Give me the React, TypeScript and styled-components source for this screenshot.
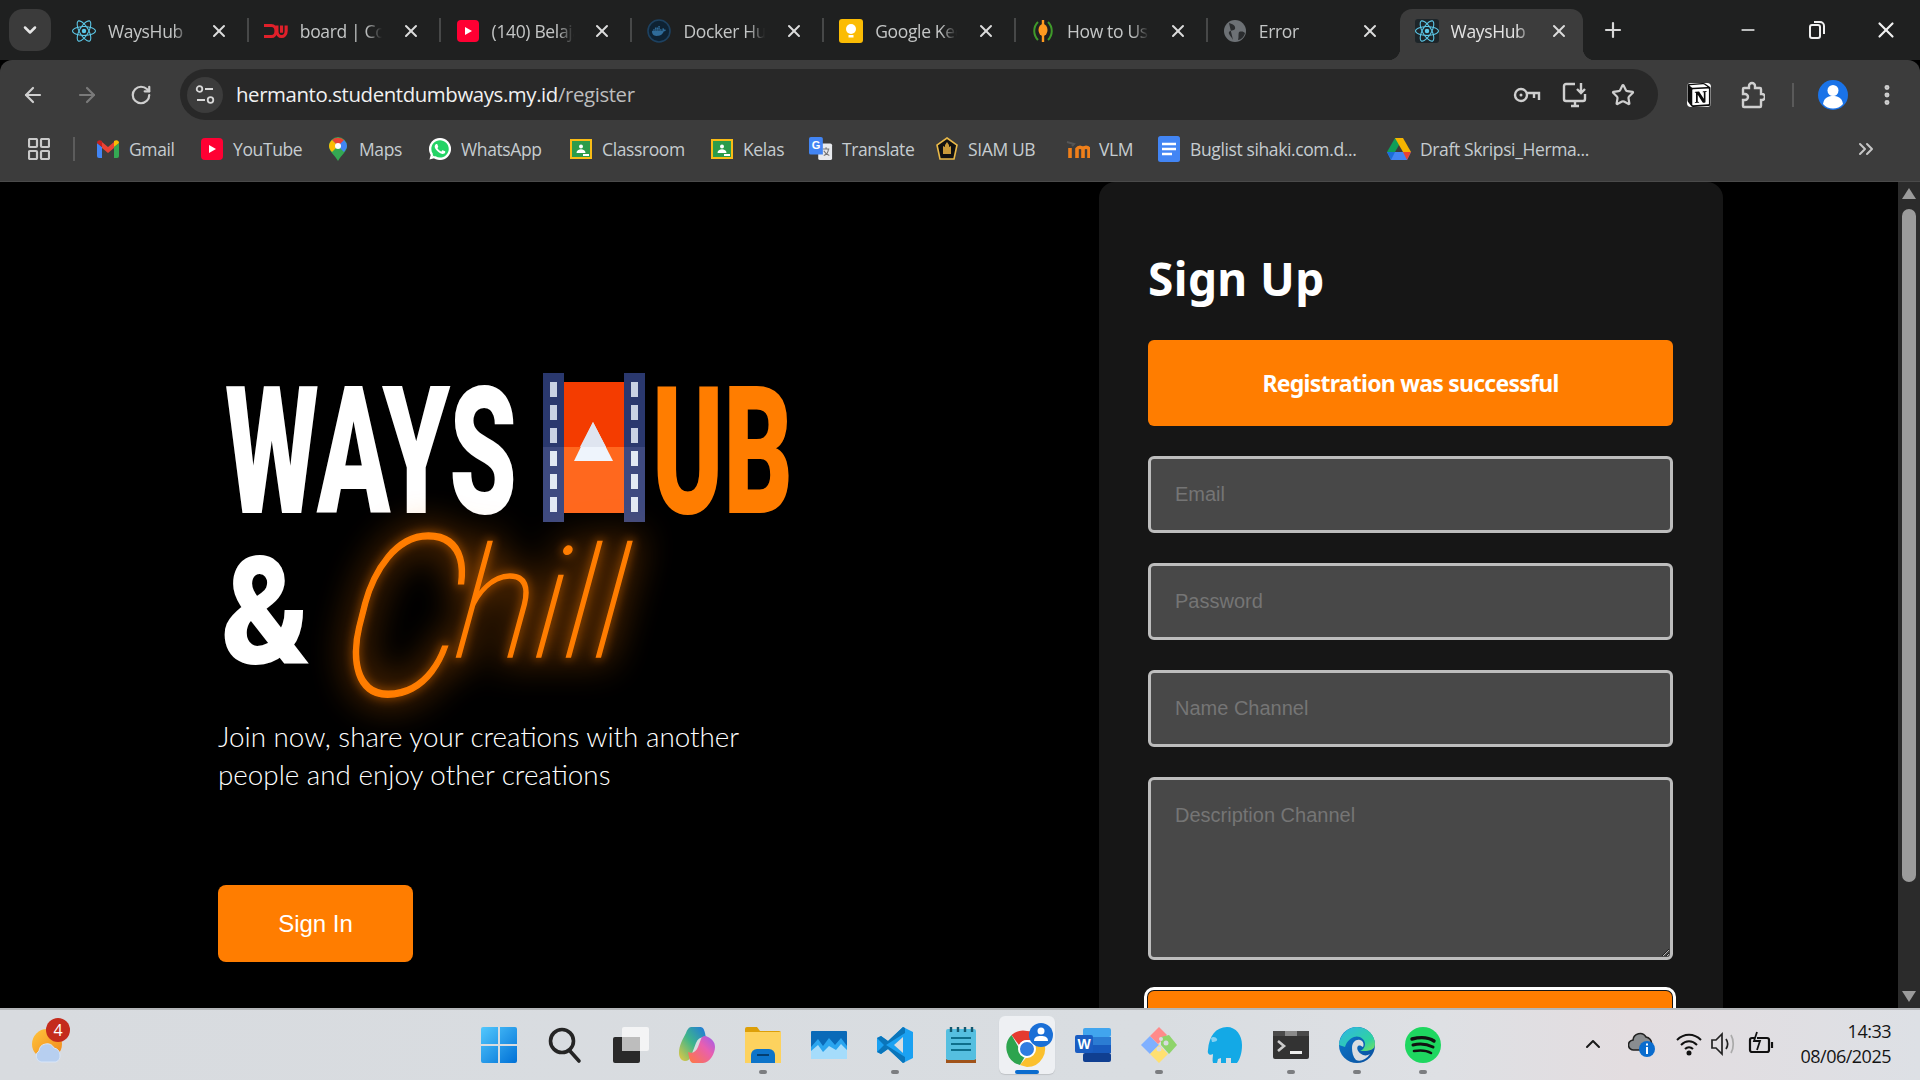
import React from "react";
import styled, { createGlobalStyle } from "styled-components";
import { ArrowLeft, ArrowRight, RotateCw, Star, MoreVertical, Plus, X, Minus, ChevronDown, ChevronsRight, ChevronUp } from "lucide-react";
import { SiReact, SiDocker, SiNotion } from "react-icons/si";
import { FaWhatsapp } from "react-icons/fa";

const Global = createGlobalStyle`
  html, body { margin: 0; padding: 0; background: #000; overflow: hidden; }
  * { box-sizing: border-box; }
  input::placeholder, textarea::placeholder { color: #757575; opacity: 1; }
`;

const UI = `"Open Sans", "Noto Sans", sans-serif`;

const Screen = styled.div`
  width: 1920px; height: 1080px; display: flex; flex-direction: column; overflow: hidden; background: #000;
`;

/* ---------- tab strip ---------- */
const TabStrip = styled.div`
  height: 60px; flex: none; background: #1f2020; display: flex; align-items: flex-end; padding-left: 9px;
`;
const TabMenu = styled.div`
  width: 42px; height: 42px; margin: 0 6px 9px 0; border-radius: 14px; background: #3b3b3b; color: #e6e6e6;
  display: flex; align-items: center; justify-content: center;
`;
const Tab = styled.div<{ $active?: boolean; $sep?: boolean }>`
  position: relative; flex: none; width: ${(p) => (p.$active ? 183.4 : 191.8)}px; height: 51px; display: flex; align-items: center;
  padding: 0 ${(p) => (p.$active ? 14 : 20)}px 8px 16px;
  border-radius: 12px 12px 0 0; background: ${(p) => (p.$active ? "#3c3c3c" : "transparent")};
  color: ${(p) => (p.$active ? "#e3e3e3" : "#c4c6c6")};
  &::after {
    content: ""; position: absolute; right: 0; top: 9px; width: 2px; height: 24px;
    background: ${(p) => (p.$sep ? "#474848" : "transparent")};
  }
`;
const TabFoot = styled.span<{ $side: "left" | "right" }>`
  position: absolute; bottom: 0; width: 12px; height: 12px;
  ${(p) => (p.$side === "left" ? "left: -12px;" : "right: -12px;")}
  background: radial-gradient(circle at ${(p) => (p.$side === "left" ? "0 0" : "100% 0")}, transparent 12px, #3c3c3c 12.5px);
`;
const TabIcon = styled.span<{ $dark?: boolean }>`
  width: 24px; height: 24px; flex: none; display: flex; align-items: center; justify-content: center; margin-left: -1px;
  background: ${(p) => (p.$dark ? "#1d2529" : "transparent")}; border-radius: 3px;
`;
const TabTitle = styled.span`
  margin-left: 12px; width: 82px; overflow: hidden; white-space: nowrap; font: 400 17.5px ${UI}; letter-spacing: -0.35px;
  mask-image: linear-gradient(to right, #000 80%, transparent 100%);
`;
const TabClose = styled.span`
  margin-left: auto; display: flex; color: #dcdcdc;
`;
const NewTab = styled.div`
  margin: 0 0 18px 18.5px; width: 24px; height: 24px; color: #d8d8d8; display: flex;
`;
const WinButtons = styled.div`
  margin-left: auto; display: flex; align-self: flex-start;
`;
const WinButton = styled.div`
  width: 69px; height: 60px; display: flex; align-items: center; justify-content: center; color: #f0f0f0;
`;

/* ---------- toolbar ---------- */
const Toolbar = styled.div`
  height: 60px; flex: none; background: #3c3c3c; border-radius: 12px 12px 0 0; display: flex; padding: 9px 0 0 6px;
`;
const ToolSlot = styled.div<{ $dim?: boolean; $gap?: number }>`
  width: 54px; height: 51px; flex: none; display: flex; align-items: center; justify-content: center;
  margin-left: ${(p) => p.$gap ?? 0}px; color: ${(p) => (p.$dim ? "#7a7a7a" : "#cfcfcf")};
`;
const Address = styled.div`
  width: 1478px; height: 51px; margin-left: 12px; flex: none; border-radius: 26px; background: #282828;
  display: flex; align-items: center; padding: 0 11px 0 7px;
`;
const SiteInfo = styled.div`
  width: 36px; height: 36px; border-radius: 50%; background: #3c3c3c; flex: none; display: flex; align-items: center; justify-content: center;
`;
const Url = styled.div`
  margin-left: 13px; padding-bottom: 2px; font: 400 20.4px ${UI}; letter-spacing: -0.4px; color: #bdbdbd; white-space: nowrap;
  b { font-weight: 400; color: #f1f1f1; }
`;
const AddrIcons = styled.div`
  margin-left: auto; display: flex;
`;
const AddrSlot = styled.div`
  width: 48px; height: 51px; display: flex; align-items: center; justify-content: center; color: #cfcfcf;
`;
const ToolSep = styled.div`
  width: 2px; height: 24px; margin: 14px 0 0 12px; background: #5a5a5a; flex: none;
`;

/* ---------- bookmarks ---------- */
const BookmarkBar = styled.div`
  height: 62px; flex: none; background: #3c3c3c; border-bottom: 1px solid #4a4a4a; display: flex; align-items: center; padding: 0 42px 3px 17px;
`;
const AppsSlot = styled.div`
  width: 44px; display: flex; justify-content: center;
`;
const BarSep = styled.div`
  width: 2px; height: 24px; background: #5c5c5c; margin: 0 21px 0 12px; flex: none;
`;
const Bookmark = styled.div<{ $w: number }>`
  width: ${(p) => p.$w}px; flex: none; display: flex; align-items: center; gap: 9px; white-space: nowrap;
  font: 400 17.5px ${UI}; letter-spacing: -0.38px; color: #c6ccd0;
`;
const BmIcon = styled.span`
  width: 24px; height: 24px; flex: none; display: flex; align-items: center; justify-content: center;
`;
const BarMore = styled.div`
  margin-left: auto; color: #c6c6c6; display: flex;
`;

/* ---------- page ---------- */
const Page = styled.div`
  height: 826px; flex: none; display: flex; background: #000; overflow: hidden;
`;
const Left = styled.div`
  flex: 0 0 1099px; padding: 188px 0 0 218px;
`;
const LogoSvg = styled.svg`
  display: block; overflow: visible;
`;
const Lead = styled.p`
  margin: 18px 0 0; width: 560px; font: 300 27.8px/38px Lato, sans-serif; color: #fff;
`;
const SignIn = styled.button`
  display: block; margin-top: 91px; width: 195px; height: 77px; border: 0; border-radius: 8px; background: #ff7d00; color: #fff;
  font: 400 24px "Liberation Sans", Arial, sans-serif;
`;
const Card = styled.div`
  flex: 0 0 624px; height: 1100px; background: #161616; border-radius: 16px; padding: 62px 50px 0 49px;
`;
const Title = styled.h1`
  margin: 0; font: 700 46px/68px "Noto Sans", "Open Sans", sans-serif; letter-spacing: 0.4px; color: #fff;
`;
const Alert = styled.div`
  margin-top: 28px; width: 525px; height: 86px; border-radius: 6px; background: #ff7d00; color: #fff; display: flex; align-items: center; justify-content: center;
  font: 700 23px "Noto Sans", "Open Sans", sans-serif; letter-spacing: -0.75px;
`;
const Form = styled.div`
  margin-top: 30px; display: flex; flex-direction: column; gap: 30px;
`;
const Field = styled.input`
  display: block; width: 525px; height: 77px; border: 3px solid #bdbdbd; border-radius: 6px; background: #484848; padding: 0 24px; outline: 0;
  font: 400 20px "Liberation Sans", Arial, sans-serif; color: #fff;
`;
const Area = styled.textarea`
  display: block; width: 525px; height: 183px; border: 3px solid #bdbdbd; border-radius: 6px; background: #484848; padding: 24px; outline: 0; resize: vertical;
  font: 400 20px "Liberation Sans", Arial, sans-serif; color: #fff;
`;
const Submit = styled.button`
  display: block; width: 524px; height: 77px; margin-top: 1px; border: 0; border-radius: 6px; background: #ff7d00; color: #fff;
  outline: 3px solid #fff; outline-offset: 1px; font: 400 24px "Liberation Sans", Arial, sans-serif;
`;
const Gutter = styled.div`
  flex: 0 0 175px;
`;
const Scrollbar = styled.div`
  flex: 0 0 22px; background: #2b2b2b; display: flex; flex-direction: column; align-items: center; padding: 6px 0 6px 0;
`;
const ScrollThumb = styled.div`
  width: 14px; height: 673px; margin-top: 10px; border-radius: 7px; background: #9b9b9b;
`;
const ScrollArrow = styled.svg<{ $end?: boolean }>`
  flex: none; ${(p) => (p.$end ? "margin-top: auto;" : "")}
`;

/* ---------- taskbar ---------- */
const Taskbar = styled.div`
  height: 72px; flex: none; border-top: 2px solid #b4b6b9; display: grid; grid-template-columns: 466px 992px 1fr;
  background: linear-gradient(90deg, #d8dbdf 0%, #d9dde1 60%, #dee0e4 75%, #e3dde0 85%, #dde0e5 100%);
`;
const Weather = styled.div`
  padding: 8px 0 0 28px; display: flex; align-items: flex-start;
`;
const TaskRow = styled.div`
  display: flex;
`;
const TaskSlot = styled.div<{ $active?: boolean; $running?: boolean }>`
  position: relative; width: 66px; height: 70px; flex: none; display: flex; align-items: center; justify-content: center; padding-bottom: 1px;
  &::before {
    content: ""; position: absolute; left: 5px; right: 5px; top: 6px; bottom: 6px; border-radius: 6px;
    background: ${(p) => (p.$active ? "#eef0f3" : "transparent")};
    box-shadow: ${(p) => (p.$active ? "0 1px 1px #bfc2c6" : "none")};
  }
  &::after {
    content: ""; position: absolute; bottom: 6px; left: 50%; height: 4px; border-radius: 2px;
    width: ${(p) => (p.$active ? 24 : 8)}px; margin-left: ${(p) => (p.$active ? -12 : -4)}px;
    background: ${(p) => (p.$active ? "#0a6cce" : p.$running ? "#7b7d80" : "transparent")};
  }
  svg { position: relative; overflow: visible; }
`;
const Tray = styled.div`
  display: flex; align-items: center; padding: 0 29px 2px 122px; color: #1a1a1a;
  svg { flex: none; }
`;
const TrayItem = styled.div<{ $w: number }>`
  width: ${(p) => p.$w}px; flex: none; display: flex; justify-content: center;
`;
const Clock = styled.div`
  margin-left: auto; text-align: right; font: 400 18px/25px ${UI}; letter-spacing: -0.5px; color: #141414;
`;

/* ---------- icons ---------- */
const ReactFav = () => <SiReact size={24} color="#5cc8e8" />;
const DwFav = () => (
  <svg width="26" height="18" viewBox="0 0 26 18" fill="none" stroke="#e0202a" strokeWidth="3.4">
    <path d="M0 3h8a5 6 0 0 1 0 12H0" /><path d="M0 9h5" strokeWidth="0" />
    <path d="M14 3v6a5 6 0 0 0 10 0V3M19 3v8" />
  </svg>
);
const YtFav = () => (
  <svg width="22" height="22" viewBox="0 0 22 22"><rect width="22" height="22" rx="4" fill="#ff0033" /><path d="M8 7l7 4-7 4z" fill="#fff" /></svg>
);
const DockerFav = () => (
  <svg width="24" height="24" viewBox="0 0 24 24"><circle cx="12" cy="12" r="11" fill="#0e2233" stroke="#1d4160" strokeWidth="1.6" /><SiDocker x="5" y="5" size={14} color="#2f6b99" /></svg>
);
const KeepFav = () => (
  <svg width="24" height="24" viewBox="0 0 24 24"><rect width="24" height="24" rx="3" fill="#fbbc04" /><circle cx="12" cy="10" r="5" fill="#fff" /><rect x="9.5" y="16" width="5" height="2.5" fill="#fff" /></svg>
);
const LeafFav = () => (
  <svg width="24" height="24" viewBox="0 0 24 24" fill="none"><path d="M7 3C2 8 2 16 7 21M17 3c5 5 5 13 0 18" stroke="#3f9a2a" strokeWidth="2" /><path d="M12 1v22" stroke="#ff9a1f" strokeWidth="2.4" /><ellipse cx="12" cy="11" rx="4.5" ry="6" fill="#ff9a1f" /></svg>
);
const GlobeFav = () => (
  <svg width="24" height="24" viewBox="0 0 24 24"><circle cx="12" cy="12" r="11" fill="#6d7175" /><path d="M6 4c4 1 7 3 6 6-1 2-5 1-6 3s2 4 4 8M16 13c3-1 5 0 6 1-1 4-4 7-7 7 1-3 0-6 1-8z" fill="#2a2c2e" /></svg>
);
const Gmail = () => (
  <svg width="22" height="18" viewBox="0 0 22 18"><path d="M0 3v13a2 2 0 0 0 2 2h3V7z" fill="#4285f4" /><path d="M22 3v13a2 2 0 0 1-2 2h-3V7z" fill="#34a853" /><path d="M5 2l6 5 6-5v6l-6 5-6-5z" fill="#ea4335" /><path d="M0 3c0-3 3-3.500 5-2v6z" fill="#c5221f" /><path d="M22 3c0-3-3-3.500-5-2v6z" fill="#fbbc04" /></svg>
);
const Maps = () => (
  <svg width="18" height="24" viewBox="0 0 18 24"><path d="M9 0a9 9 0 0 1 9 9c0 6-6 9-9 15-3-6-9-9-9-15a9 9 0 0 1 9-9z" fill="#34a853" /><path d="M3 3L15 15c2-3 3-4 3-6a9 9 0 0 0-3-6z" fill="#4285f4" /><path d="M3 3a9 9 0 0 1 12 0l-6 6z" fill="#ea4335" /><path d="M0 9c0-2 1-4 3-6l6 6-6 6c-2-2-3-4-3-6z" fill="#fbbc04" /><circle cx="9" cy="9" r="3" fill="#fff" /></svg>
);
const Wa = () => (
  <svg width="24" height="24" viewBox="0 0 24 24"><circle cx="12" cy="12" r="11" fill="#fff" /><circle cx="12" cy="12" r="9.500" fill="#25d366" /><FaWhatsapp x="0" y="0" size={24} color="#fff" /></svg>
);
const Classroom = () => (
  <svg width="24" height="24" viewBox="0 0 24 24"><rect x="1" y="2" width="22" height="20" fill="#f9bc15" /><rect x="3" y="4" width="18" height="16" fill="#2c9c4b" /><rect x="14" y="17" width="6" height="2" fill="#fff" /><circle cx="12" cy="9.500" r="2" fill="#fff" /><path d="M7.500 16c0-5 9-5 9 0z" fill="#fff" /></svg>
);
const Translate = () => (
  <svg width="26" height="26" viewBox="0 0 26 26"><rect x="10" y="7" width="15" height="18" rx="2" fill="#e8eaed" /><path d="M15 13h7M18.500 11v2M16 20c3-1 5-4 5-7M16 15c1 2 3 4 6 5" stroke="#757575" strokeWidth="1.200" fill="none" /><path d="M2 0h11a2 2 0 0 1 2 2v17H2a2 2 0 0 1-2-2V2a2 2 0 0 1 2-2z" fill="#4285f4" /><text x="7.500" y="13" textAnchor="middle" fontFamily="Liberation Sans" fontWeight="700" fontSize="12" fill="#fff">G</text></svg>
);
const Siam = () => (
  <svg width="24" height="24" viewBox="0 0 24 24"><path d="M12 1l10 7-3 14H5L2 8z" fill="#111" stroke="#e9b949" strokeWidth="1.600" /><path d="M12 5l2 3v2l2-1v8H8V9l2 1V8z" fill="#c99a3a" /></svg>
);
const Vlm = () => (
  <svg width="24" height="20" viewBox="0 0 24 20" fill="none"><path d="M1 3l7 2-2 2" stroke="#555" strokeWidth="2" /><path d="M4 19V9M11 19V10a3.500 3.500 0 0 1 6 0v9M23 19V10a3.500 3.500 0 0 0-6 0" stroke="#ef7f1a" strokeWidth="3.600" /></svg>
);
const Docs = () => (
  <svg width="22" height="26" viewBox="0 0 22 26"><rect width="22" height="26" rx="2.500" fill="#4285f4" /><path d="M4 8h14M4 13h14M4 18h10" stroke="#fff" strokeWidth="2.600" /></svg>
);
const Drive = () => (
  <svg width="24" height="22" viewBox="0 0 24 22"><path d="M8 0h8L8 14H0z" fill="#0f9d58" /><path d="M8 0h8l8 14h-8z" fill="#f4b400" /><path d="M0 14h24l-4 8H4z" fill="#4285f4" /><path d="M16 14h8l-4 8z" fill="#ea4335" /><path d="M0 14h8l-4 8z" fill="#1a6ed8" /></svg>
);

const InfoIcon = () => (
  <svg width="20" height="22" viewBox="0 0 20 22" fill="none" stroke="#d8d8d8" strokeWidth="1.800">
    <circle cx="4.500" cy="5" r="2.800" /><path d="M10 5h8M2 16h8" /><circle cx="15.500" cy="16" r="2.800" />
  </svg>
);
const KeyIcon = () => (
  <svg width="28" height="20" viewBox="0 0 28 20" fill="none" stroke="#cfcfcf" strokeWidth="2.400">
    <circle cx="8" cy="10" r="6" /><circle cx="8" cy="10" r="1.500" fill="#cfcfcf" strokeWidth="0" /><path d="M14 8h12v7M21 8v5" />
  </svg>
);
const InstallIcon = () => (
  <svg width="26" height="26" viewBox="0 0 26 26" fill="none" stroke="#cfcfcf" strokeWidth="2.400">
    <path d="M13 2H4a2 2 0 0 0-2 2v13a2 2 0 0 0 2 2h17a2 2 0 0 0 2-2v-5M9 24h8M13 19v5" /><path d="M19 1v10M15 7l4 4 4-4" />
  </svg>
);
const PuzzleIcon = () => (
  <svg width="24" height="28" viewBox="0 0 24 28" fill="none" stroke="#cfcfcf" strokeWidth="2.400">
    <path d="M3 7h5V5a3 3 0 0 1 6 0v2h5a1 1 0 0 1 1 1v5h1a3 3 0 0 1 0 6h-1v6a1 1 0 0 1-1 1H3a1 1 0 0 1-1-1v-6h2a3 3 0 0 0 0-6H2V8a1 1 0 0 1 1-1z" />
  </svg>
);
const NotionIcon = () => (
  <svg width="26" height="26" viewBox="0 0 26 26"><rect x="1" y="1" width="24" height="24" rx="4" fill="#fff" /><SiNotion x="1" y="1" size={24} color="#0b0b0b" /></svg>
);
const Avatar = () => (
  <svg width="30" height="30" viewBox="0 0 30 30"><circle cx="15" cy="15" r="15" fill="#1a73e8" /><circle cx="15" cy="10.500" r="5.500" fill="#fff" /><path d="M5 24c1-7 6-8 10-8s9 1 10 8c-5 6-15 6-20 0z" fill="#fff" /></svg>
);
const Apps = () => (
  <svg width="22" height="22" viewBox="0 0 22 22" fill="none" stroke="#c9c9c9" strokeWidth="2.200">
    <rect x="1" y="1" width="8" height="8" rx="1" /><rect x="13" y="1" width="8" height="8" rx="1" /><rect x="1" y="13" width="8" height="8" rx="1" /><rect x="13" y="13" width="8" height="8" rx="1" />
  </svg>
);
const RestoreIcon = () => (
  <svg width="16" height="18" viewBox="0 0 16 18" fill="none" stroke="#f0f0f0" strokeWidth="2">
    <rect x="1" y="4" width="10" height="13" rx="2" /><path d="M5 1h6a4 4 0 0 1 4 4v8" />
  </svg>
);

/* ---------- logo ---------- */
const Logo = () => {
  const holes = [12, 35, 58, 81, 104, 127];
  const chill = (
    <>
      <text x="0" y="0" transform="translate(118 325) skewX(-6) scale(0.86 1)" fontFamily="Roboto" fontWeight="100" fontStyle="italic" fontSize="225">C</text>
      <text x="0" y="0" transform="translate(234 287) skewX(-6) scale(0.97 1)" fontFamily="Roboto" fontWeight="100" fontStyle="italic" fontSize="154">hill</text>
    </>
  );
  return (
    <LogoSvg width="582" height="330" viewBox="0 0 582 330">
      <defs>
        <filter id="glow" x="-30%" y="-30%" width="160%" height="160%"><feGaussianBlur stdDeviation="18" /></filter>
        <filter id="glowIn" x="-30%" y="-30%" width="160%" height="160%"><feGaussianBlur stdDeviation="5" /></filter>
      </defs>
      <text x="7" y="143" textLength="292" lengthAdjust="spacingAndGlyphs" fontFamily="Roboto" fontWeight="900" fontSize="178" fill="#fff">WAYS</text>
      <rect x="346" y="12" width="60" height="65" fill="#f43c00" />
      <rect x="346" y="77" width="60" height="66" fill="#ff681e" />
      <rect x="325" y="3" width="21" height="74" fill="#2a386e" />
      <rect x="325" y="77" width="21" height="75" fill="#3e4a80" />
      <rect x="406" y="3" width="21" height="74" fill="#2a386e" />
      <rect x="406" y="77" width="21" height="75" fill="#3e4a80" />
      {holes.map((y) => (
        <g key={y} fill={y < 70 ? "#c9d2e4" : "#e2e9f4"}>
          <rect x="332" y={y} width="7" height="15" />
          <rect x="413" y={y} width="7" height="15" />
        </g>
      ))}
      <path d="M375 52L395 91H356z" fill="#eef4fc" />
      <path d="M375 52L388 77H362z" fill="#dfe5f0" />
      <text x="434" y="143" textLength="141" lengthAdjust="spacingAndGlyphs" fontFamily="Roboto" fontWeight="900" fontSize="178" fill="#ff7d00">UB</text>
      <text x="3" y="293" textLength="90" lengthAdjust="spacingAndGlyphs" fontFamily="Roboto" fontWeight="900" fontSize="150" fill="#fff">&amp;</text>
      <g fill="#ff7d00" stroke="#ff7d00" strokeWidth="14" opacity="0.42" filter="url(#glow)">{chill}</g>
      <g fill="#ff7d00" stroke="#ff7d00" strokeWidth="5" opacity="0.4" filter="url(#glowIn)">{chill}</g>
      <g fill="#ff7d00" stroke="#ff7d00" strokeWidth="1.500">{chill}</g>
    </LogoSvg>
  );
};

/* ---------- taskbar icons ---------- */
const WeatherIcon = () => (
  <svg width="44" height="48" viewBox="0 0 44 48">
    <defs><linearGradient id="sun" x1="0" y1="0" x2="1" y2="1"><stop offset="0" stopColor="#ffc53d" /><stop offset="1" stopColor="#f0851a" /></linearGradient></defs>
    <circle cx="19" cy="26" r="15" fill="url(#sun)" />
    <path d="M13 44a6 6 0 0 1-2-11 8 8 0 0 1 15-3 7 7 0 0 1 6 7 7 7 0 0 1-4 7z" fill="#b7cff0" stroke="#d9e6f8" />
    <circle cx="30" cy="12" r="12" fill="#c42b1c" />
    <text x="30" y="18" textAnchor="middle" fontFamily="Open Sans" fontSize="16" fill="#fff">4</text>
  </svg>
);
const WinIcon = () => (
  <svg width="36" height="36" viewBox="0 0 36 36">
    <defs><linearGradient id="win" x1="0" y1="0" x2="1" y2="1"><stop offset="0" stopColor="#52c8fd" /><stop offset="1" stopColor="#0070d6" /></linearGradient></defs>
    <path d="M0 2a2 2 0 0 1 2-2h15v17H0zM19 0h15a2 2 0 0 1 2 2v15H19zM0 19h17v17H2a2 2 0 0 1-2-2zM19 19h17v15a2 2 0 0 1-2 2H19z" fill="url(#win)" />
  </svg>
);
const SearchIcon = () => (
  <svg width="34" height="36" viewBox="0 0 34 36" fill="none" stroke="#252525" strokeWidth="3.600" strokeLinecap="round"><circle cx="14" cy="14" r="11.500" /><path d="M22 24l9 10" /></svg>
);
const TaskIcon = () => (
  <svg width="36" height="36" viewBox="0 0 36 36"><rect x="0" y="10" width="27" height="26" rx="2" fill="#2a2a2a" /><rect x="9" y="0" width="27" height="24" rx="2" fill="#f8f8f8" opacity="0.85" /><rect x="9" y="10" width="18" height="14" fill="#bdbdbd" /></svg>
);
const CopilotIcon = () => (
  <svg width="36" height="36" viewBox="0 0 36 36">
    <defs>
      <linearGradient id="cp1" x1="0" y1="1" x2="1" y2="0"><stop offset="0" stopColor="#e9c940" /><stop offset=".5" stopColor="#3fb58a" /><stop offset="1" stopColor="#1f76e0" /></linearGradient>
      <linearGradient id="cp2" x1="0" y1="1" x2="1" y2="0"><stop offset="0" stopColor="#ff7a3d" /><stop offset=".6" stopColor="#e85fb0" /><stop offset="1" stopColor="#9a5cf0" /></linearGradient>
    </defs>
    <path d="M12 0h9c3 0 4 2 5 6l1 5c-4-2-8 0-10 5l-5 13c-1 3-3 5-6 5-4 0-6-4-6-8 0-8 4-14 7-20 1-3 3-6 5-6z" fill="url(#cp1)" />
    <path d="M24 36h-9c-3 0-4-2-5-6l-1-5c4 2 8 0 10-5l3-8c1-3 4-4 7-2 4 2 7 5 7 10 0 6-5 16-12 16z" fill="url(#cp2)" />
  </svg>
);
const FilesIcon = () => (
  <svg width="36" height="36" viewBox="0 0 36 36">
    <path d="M0 2a2 2 0 0 1 2-2h10l3 4h19a2 2 0 0 1 2 2v4H0z" fill="#dd9f08" />
    <rect x="0" y="5" width="36" height="31" fill="#fdd25e" />
    <path d="M6 36v-8a6 6 0 0 1 6-6h12a6 6 0 0 1 6 6v8z" fill="#0d74c9" /><rect x="12" y="27" width="12" height="2" fill="#033e70" />
  </svg>
);
const PhotoIcon = () => (
  <svg width="36" height="28" viewBox="0 0 36 28">
    <rect width="36" height="28" rx="1" fill="#0a6ab8" /><path d="M0 16l7-8 5 7 6-8 6 7 6-7 6 8v13H0z" fill="#2aa5ef" /><path d="M0 20l7-6 5 7 6-6 7 4 5-6 6 6v9H0z" fill="#a5dcfb" />
  </svg>
);
const CodeIcon = () => (
  <svg width="36" height="36" viewBox="0 0 36 36">
    <path d="M26 0l10 5v26l-10 5-15-14-7 5-4-2v-14l4-2 7 5zM26 10l-9 8 9 8z" fill="#1ba1f2" />
    <path d="M26 0L11 14l-7-5-4 2 7 7-7 7 4 2 7-5 15 14 2-1v-5L9 18 28 6V1z" fill="#0a75ba" />
  </svg>
);
const NoteIcon = () => (
  <svg width="30" height="36" viewBox="0 0 30 36">
    <rect y="32" width="30" height="4" fill="#a0531a" /><rect y="2" width="30" height="31" rx="2" fill="#55bfe0" />
    <path d="M5 0v5M12 0v5M19 0v5M26 0v5" stroke="#12586f" strokeWidth="2.400" /><path d="M5 11h20M5 17h20M5 23h20" stroke="#0e6f8c" strokeWidth="2.200" />
  </svg>
);
const ChromeIcon = () => (
  <svg width="48" height="44" viewBox="-5 0 48 44">
    <path d="M19 8a18 18 0 0 1 15.600 9H19a9 9 0 0 0-8 5L3.500 12A18 18 0 0 1 19 8z" fill="#e53a2f" />
    <path d="M3.500 12L11 25a9 9 0 0 0 8 5l-7 12A18 18 0 0 1 3.500 12z" fill="#2da44e" />
    <path d="M34.600 17A18 18 0 0 1 19 44l-7-2 0 0 10-12a9 9 0 0 0 4-13z" fill="#fbc02d" />
    <circle cx="19" cy="26" r="8" fill="#2f7de1" stroke="#fff" strokeWidth="2" />
    <circle cx="33" cy="12" r="12" fill="#1a6fd6" />
    <circle cx="33" cy="8" r="3.500" fill="#fff" /><path d="M26 18c0-4 3-5 7-5s7 1 7 5z" fill="#fff" />
  </svg>
);
const WordIcon = () => (
  <svg width="36" height="34" viewBox="0 0 36 34">
    <rect x="8" y="0" width="28" height="9" rx="2" fill="#41a5ee" /><rect x="8" y="9" width="28" height="8" fill="#2b7cd3" /><rect x="8" y="17" width="28" height="8" fill="#185abd" /><rect x="8" y="25" width="28" height="9" rx="2" fill="#103f91" />
    <rect x="0" y="7" width="18" height="18" rx="2" fill="#1a5dc2" />
    <text x="9" y="21" textAnchor="middle" fontFamily="Liberation Sans" fontWeight="700" fontSize="14" fill="#fff">W</text>
  </svg>
);
const DiamondIcon = () => (
  <svg width="36" height="36" viewBox="0 0 36 36">
    <path d="M0 18l9-9 9 9-9 9z" fill="#7fb0ff" /><path d="M9 9l9-9 8 8-9 9z" fill="#ff8a8a" /><path d="M20 10l8-2 8 10-8 9-8-9z" fill="#8ed46a" /><path d="M9 27l9-9 9 9-9 9z" fill="#ffe070" />
    <circle cx="20" cy="12" r="2" fill="#d9dce0" /><circle cx="25" cy="16" r="2.500" fill="#d9dce0" /><circle cx="18" cy="22" r="2.500" fill="#d9dce0" />
  </svg>
);
const ElephantIcon = () => (
  <svg width="34" height="36" viewBox="0 0 34 36">
    <path d="M5 36c-1-3 0-6 0-9-3 2-6 0-5-4C1 9 8 0 19 0c9 0 15 8 15 18 0 8-2 14-5 18h-6v-5h-5v5h-5v-5l-3 1-1 4z" fill="#13a9e6" />
    <path d="M3 11c2-2 5-1 6 1s-2 3-5 3z" fill="#d0ecf8" opacity=".6" />
  </svg>
);
const TermIcon = () => (
  <svg width="36" height="28" viewBox="0 0 36 28">
    <rect width="36" height="28" rx="2" fill="#333" /><rect x="0" width="12" height="5" fill="#4a4a4a" /><rect x="12" width="12" height="5" fill="#8a8a8a" /><rect x="24" width="12" height="5" fill="#4a4a4a" />
    <path d="M5 10l6 5-6 5" fill="none" stroke="#ccc" strokeWidth="2.600" /><rect x="17" y="20" width="12" height="3" fill="#eee" />
  </svg>
);
const EdgeIcon = () => (
  <svg width="36" height="36" viewBox="0 0 36 36">
    <defs>
      <linearGradient id="eg1" x1="0" y1="0" x2="1" y2="1"><stop offset="0" stopColor="#2fb4e8" /><stop offset=".7" stopColor="#2fd3a0" /><stop offset="1" stopColor="#7fe05c" /></linearGradient>
      <linearGradient id="eg2" x1="0" y1="0" x2="1" y2="1"><stop offset="0" stopColor="#0c7cd0" /><stop offset="1" stopColor="#0a4e9c" /></linearGradient>
    </defs>
    <circle cx="18" cy="18" r="18" fill="url(#eg2)" />
    <path d="M0 18C1 7 9 0 18 0c11 0 18 9 18 17 0 6-6 7-11 7h-4c3-1 5-4 5-7 0-5-6-9-11-7-5 2-8 6-9 10z" fill="url(#eg1)" />
    <path d="M13 21c0-6 4-9 8-8 4 1 4 5 3 7-2-1-3-2-5-1-2 2 0 7 5 9 3 1 5 0 7-1-4 6-10 8-14 6-3-3-4-8-4-12z" fill="#d9dde1" />
  </svg>
);
const SpotifyIcon = () => (
  <svg width="36" height="36" viewBox="0 0 36 36" fill="none" stroke="#111" strokeLinecap="round">
    <circle cx="18" cy="18" r="18" fill="#1ed760" stroke="none" />
    <path d="M7 12c8-2 16-2 22 2" strokeWidth="3.400" /><path d="M8 18c7-2 14-1 20 2" strokeWidth="3" /><path d="M9 24c6-1 12-1 17 2" strokeWidth="2.600" />
  </svg>
);
const CloudInfo = () => (
  <svg width="28" height="28" viewBox="0 0 28 28">
    <path d="M6 20a5 5 0 0 1-1-10 7 7 0 0 1 13-3 7 7 0 0 1 2 13z" fill="#8a8d90" stroke="#222" strokeWidth="1.600" />
    <circle cx="19" cy="19" r="8" fill="#0a6cce" /><rect x="18" y="17" width="2" height="7" fill="#fff" /><rect x="18" y="13.500" width="2" height="2" fill="#fff" />
  </svg>
);
const WifiIcon = () => (
  <svg width="26" height="24" viewBox="0 0 26 24" fill="none" stroke="#111" strokeWidth="2"><path d="M1 8c7-7 17-7 24 0M5 13c5-5 11-5 16 0M9 17c2.500-2.500 5.500-2.500 8 0" /><circle cx="13" cy="21" r="1.500" fill="#111" /></svg>
);
const VolumeIcon = () => (
  <svg width="26" height="26" viewBox="0 0 26 26" fill="none" stroke="#222" strokeWidth="1.700"><path d="M2 9h4l6-6v20l-6-6H2z" /><path d="M16 8c2 3 2 7 0 10" /><path d="M21 4c3 5 3 13 0 18" stroke="#aaa" /></svg>
);
const BatteryIcon = () => (
  <svg width="26" height="26" viewBox="0 0 26 26" fill="none" stroke="#111" strokeWidth="2.200"><rect x="2" y="7" width="19" height="14" rx="2" /><path d="M24 11v6" /><path d="M9 1l-3 9h6l-3 9" strokeWidth="1.800" fill="#d9dde1" /></svg>
);

const tabs: { title: string; icon: React.ReactNode; sep?: boolean; active?: boolean }[] = [
  { title: "WaysHub", icon: <ReactFav />, sep: true },
  { title: "board | Coding", icon: <DwFav />, sep: true },
  { title: "(140) Belajar", icon: <YtFav />, sep: true },
  { title: "Docker Hub", icon: <DockerFav />, sep: true },
  { title: "Google Keep", icon: <KeepFav />, sep: true },
  { title: "How to Use", icon: <LeafFav />, sep: true },
  { title: "Error", icon: <GlobeFav /> },
  { title: "WaysHub", icon: <ReactFav />, active: true },
];

const marks: { label: string; w: number; icon: React.ReactNode }[] = [
  { label: "Gmail", w: 104, icon: <Gmail /> },
  { label: "YouTube", w: 126, icon: <YtFav /> },
  { label: "Maps", w: 102, icon: <Maps /> },
  { label: "WhatsApp", w: 141, icon: <Wa /> },
  { label: "Classroom", w: 141, icon: <Classroom /> },
  { label: "Kelas", w: 99, icon: <Classroom /> },
  { label: "Translate", w: 126, icon: <Translate /> },
  { label: "SIAM UB", w: 131, icon: <Siam /> },
  { label: "VLM", w: 91, icon: <Vlm /> },
  { label: "Buglist sihaki.com.d...", w: 230, icon: <Docs /> },
  { label: "Draft Skripsi_Herma...", w: 240, icon: <Drive /> },
];

const dock: { icon: React.ReactNode; running?: boolean; active?: boolean }[] = [
  { icon: <WinIcon /> },
  { icon: <SearchIcon /> },
  { icon: <TaskIcon /> },
  { icon: <CopilotIcon /> },
  { icon: <FilesIcon />, running: true },
  { icon: <PhotoIcon /> },
  { icon: <CodeIcon />, running: true },
  { icon: <NoteIcon /> },
  { icon: <ChromeIcon />, active: true },
  { icon: <WordIcon /> },
  { icon: <DiamondIcon />, running: true },
  { icon: <ElephantIcon /> },
  { icon: <TermIcon />, running: true },
  { icon: <EdgeIcon />, running: true },
  { icon: <SpotifyIcon />, running: true },
];

export default function App() {
  return (
    <Screen>
      <Global />
      <TabStrip>
        <TabMenu><ChevronDown size={20} strokeWidth={3} /></TabMenu>
        {tabs.map((t, i) => (
          <Tab key={i} $active={t.active} $sep={t.sep}>
            {t.active && <TabFoot $side="left" />}
            {t.active && <TabFoot $side="right" />}
            <TabIcon $dark={t.active}>{t.icon}</TabIcon>
            <TabTitle>{t.title}</TabTitle>
            <TabClose><X size={20} strokeWidth={2.4} /></TabClose>
          </Tab>
        ))}
        <NewTab><Plus size={24} strokeWidth={2.2} /></NewTab>
        <WinButtons>
          <WinButton><Minus size={20} strokeWidth={2} /></WinButton>
          <WinButton><RestoreIcon /></WinButton>
          <WinButton><X size={26} strokeWidth={2} /></WinButton>
        </WinButtons>
      </TabStrip>

      <Toolbar>
        <ToolSlot><ArrowLeft size={24} strokeWidth={2.2} /></ToolSlot>
        <ToolSlot $dim><ArrowRight size={24} strokeWidth={2.2} /></ToolSlot>
        <ToolSlot><RotateCw size={22} strokeWidth={2.4} /></ToolSlot>
        <Address>
          <SiteInfo><InfoIcon /></SiteInfo>
          <Url><b>hermanto.studentdumbways.my.id</b>/register</Url>
          <AddrIcons>
            <AddrSlot><KeyIcon /></AddrSlot>
            <AddrSlot><InstallIcon /></AddrSlot>
            <AddrSlot><Star size={24} strokeWidth={2.2} /></AddrSlot>
          </AddrIcons>
        </Address>
        <ToolSlot $gap={14}><NotionIcon /></ToolSlot>
        <ToolSlot><PuzzleIcon /></ToolSlot>
        <ToolSep />
        <ToolSlot $gap={12}><Avatar /></ToolSlot>
        <ToolSlot><MoreVertical size={26} strokeWidth={2.6} /></ToolSlot>
      </Toolbar>

      <BookmarkBar>
        <AppsSlot><Apps /></AppsSlot>
        <BarSep />
        {marks.map((m) => (
          <Bookmark key={m.label} $w={m.w}>
            <BmIcon>{m.icon}</BmIcon>
            {m.label}
          </Bookmark>
        ))}
        <BarMore><ChevronsRight size={24} strokeWidth={2} /></BarMore>
      </BookmarkBar>

      <Page>
        <Left>
          <Logo />
          <Lead>Join now, share your creations with another people and enjoy other creations</Lead>
          <SignIn>Sign In</SignIn>
        </Left>
        <Card>
          <Title>Sign Up</Title>
          <Alert>Registration was successful</Alert>
          <Form>
            <Field placeholder="Email" />
            <Field placeholder="Password" type="password" />
            <Field placeholder="Name Channel" />
            <Area placeholder="Description Channel" />
            <Submit>Sign Up</Submit>
          </Form>
        </Card>
        <Gutter />
        <Scrollbar>
          <ScrollArrow width="14" height="11" viewBox="0 0 14 11"><path d="M7 0l7 11H0z" fill="#9b9b9b" /></ScrollArrow>
          <ScrollThumb />
          <ScrollArrow $end width="14" height="11" viewBox="0 0 14 11"><path d="M7 11L0 0h14z" fill="#9b9b9b" /></ScrollArrow>
        </Scrollbar>
      </Page>

      <Taskbar>
        <Weather><WeatherIcon /></Weather>
        <TaskRow>
          {dock.map((d, i) => (
            <TaskSlot key={i} $active={d.active} $running={d.running}>{d.icon}</TaskSlot>
          ))}
        </TaskRow>
        <Tray>
          <TrayItem $w={26}><ChevronUp size={24} strokeWidth={2} /></TrayItem>
          <TrayItem $w={72}><CloudInfo /></TrayItem>
          <TrayItem $w={22}><WifiIcon /></TrayItem>
          <TrayItem $w={46}><VolumeIcon /></TrayItem>
          <TrayItem $w={30}><BatteryIcon /></TrayItem>
          <Clock>14:33<br />08/06/2025</Clock>
        </Tray>
      </Taskbar>
    </Screen>
  );
}
